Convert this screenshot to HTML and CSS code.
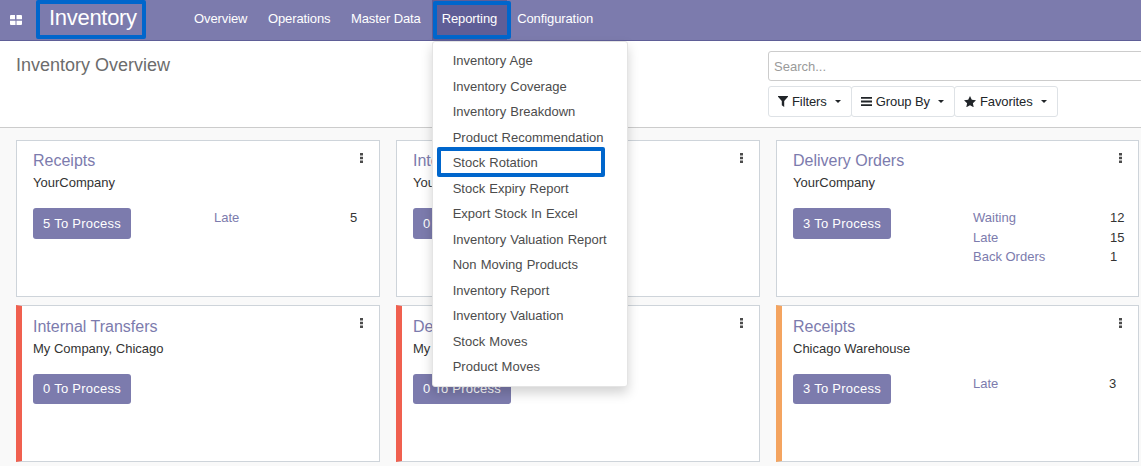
FILE: index.html
```html
<!DOCTYPE html>
<html lang="en">
<head>
    <meta charset="UTF-8">
    <meta name="viewport" content="width=device-width, initial-scale=1.0">
    <title>Inventory Overview</title>
    <link rel="stylesheet" href="styles.css">
</head>
<body>

<nav class="navbar">
    <a class="apps-toggle" aria-label="Apps">
        <svg width="12" height="10" viewBox="0 0 12 10"><path d="M0 1a1 1 0 0 1 1-1h4v4.300H0zM6.500 0H11a1 1 0 0 1 1 1v3.300H6.500zM0 5.700h5.500V10H1a1 1 0 0 1-1-1zM6.500 5.700H12V9a1 1 0 0 1-1 1H6.500z"/></svg>
    </a>
    <a class="brand marked">Inventory</a>
    <ul class="menu-list">
        <li class="menu-item">Overview</li>
        <li class="menu-item">Operations</li>
        <li class="menu-item">Master Data</li>
        <li class="menu-item active marked">
            Reporting
            <ul class="dropdown">
                <li>Inventory Age</li>
                <li>Inventory Coverage</li>
                <li>Inventory Breakdown</li>
                <li>Product Recommendation</li>
                <li class="picked">Stock Rotation</li>
                <li>Stock Expiry Report</li>
                <li>Export Stock In Excel</li>
                <li>Inventory Valuation Report</li>
                <li>Non Moving Products</li>
                <li>Inventory Report</li>
                <li>Inventory Valuation</li>
                <li>Stock Moves</li>
                <li>Product Moves</li>
            </ul>
        </li>
        <li class="menu-item">Configuration</li>
    </ul>
</nav>

<header class="control-panel">
    <h1 class="page-title">Inventory Overview</h1>
    <div class="search-side">
        <div class="search-box">Search...</div>
        <div class="search-buttons">
            <button class="filter-btn">
                <svg class="btn-icon" width="10" height="11" viewBox="0 0 10 11"><path d="M0 0h10v.8L6.200 5v6L3.800 9.200V5L0 .8z"/></svg>
                Filters<span class="caret"></span>
            </button>
            <button class="filter-btn">
                <svg class="btn-icon" width="11" height="9" viewBox="0 0 11 9"><path d="M0 0h11v1.800H0zM0 3.600h11v1.800H0zM0 7.200h11V9H0z"/></svg>
                Group By<span class="caret"></span>
            </button>
            <button class="filter-btn">
                <svg class="btn-icon" width="12" height="11" viewBox="0 0 12 11"><path d="M6 0l1.800 3.800 4.200.5-3.100 2.900.8 4.100L6 9.300l-3.700 2 .8-4.100L0 4.300l4.200-.5z"/></svg>
                Favorites<span class="caret"></span>
            </button>
        </div>
    </div>
</header>

<main class="dashboard">

    <section class="card">
        <div class="card-head">
            <div class="card-title">Receipts</div>
            <svg class="kebab" width="3" height="10" viewBox="0 0 3 10"><path d="M0 0h3v2.500H0zM0 3.800h3v2.500H0zM0 7.500h3V10H0z"/></svg>
        </div>
        <div class="card-sub">YourCompany</div>
        <div class="card-body">
            <a class="process-btn">5 To Process</a>
            <div class="stats">
                <span class="stat-name">Late</span><span>5</span>
            </div>
        </div>
    </section>

    <section class="card">
        <div class="card-head">
            <div class="card-title">Internal Transfers</div>
            <svg class="kebab" width="3" height="10" viewBox="0 0 3 10"><path d="M0 0h3v2.500H0zM0 3.800h3v2.500H0zM0 7.500h3V10H0z"/></svg>
        </div>
        <div class="card-sub">YourCompany</div>
        <div class="card-body">
            <a class="process-btn">0 To Process</a>
        </div>
    </section>

    <section class="card narrow">
        <div class="card-head">
            <div class="card-title">Delivery Orders</div>
            <svg class="kebab" width="3" height="10" viewBox="0 0 3 10"><path d="M0 0h3v2.500H0zM0 3.800h3v2.500H0zM0 7.500h3V10H0z"/></svg>
        </div>
        <div class="card-sub">YourCompany</div>
        <div class="card-body">
            <a class="process-btn">3 To Process</a>
            <div class="stats">
                <span class="stat-name">Waiting</span><span>12</span>
                <span class="stat-name">Late</span><span>15</span>
                <span class="stat-name">Back Orders</span><span>1</span>
            </div>
        </div>
    </section>

    <section class="card lower red">
        <div class="card-head">
            <div class="card-title">Internal Transfers</div>
            <svg class="kebab" width="3" height="10" viewBox="0 0 3 10"><path d="M0 0h3v2.500H0zM0 3.800h3v2.500H0zM0 7.500h3V10H0z"/></svg>
        </div>
        <div class="card-sub">My Company, Chicago</div>
        <div class="card-body">
            <a class="process-btn">0 To Process</a>
        </div>
    </section>

    <section class="card lower red">
        <div class="card-head">
            <div class="card-title">Delivery Orders</div>
            <svg class="kebab" width="3" height="10" viewBox="0 0 3 10"><path d="M0 0h3v2.500H0zM0 3.800h3v2.500H0zM0 7.500h3V10H0z"/></svg>
        </div>
        <div class="card-sub">My Company, Chicago</div>
        <div class="card-body">
            <a class="process-btn">0 To Process</a>
        </div>
    </section>

    <section class="card lower orange narrow">
        <div class="card-head">
            <div class="card-title">Receipts</div>
            <svg class="kebab" width="3" height="10" viewBox="0 0 3 10"><path d="M0 0h3v2.500H0zM0 3.800h3v2.500H0zM0 7.500h3V10H0z"/></svg>
        </div>
        <div class="card-sub">Chicago Warehouse</div>
        <div class="card-body">
            <a class="process-btn">3 To Process</a>
            <div class="stats">
                <span class="stat-name">Late</span><span>3</span>
            </div>
        </div>
    </section>

</main>

</body>
</html>
```

FILE: styles.css
```css
html, body {
    height: 466px;
    overflow: hidden;
}

body {
    font-family: "Liberation Sans", Arial, sans-serif;
    font-size: 13px;
    line-height: 1.5;
    background-color: #f9f9f9;
    color: #4c4c4c;
    margin: 0;
}

/* top bar */
.navbar {
    display: flex;
    height: 40px;
    background-color: #7c7bad;
    border-bottom: 1px solid #5f5e97;
    color: #fff;
}

.apps-toggle {
    display: flex;
    align-items: center;
    width: 26px;
    padding-left: 10px;
    fill: #fff;
}

.brand {
    position: relative;
    box-sizing: border-box;
    width: 110px;
    padding-left: 13px;
    margin-right: 38px;
    font-size: 22px;
    letter-spacing: -0.3px;
    line-height: 36px;
}

.menu-list {
    display: flex;
    gap: 0.5px;
    list-style: none;
    margin: 0;
    padding: 0;
}

.menu-item {
    position: relative;
    padding: 0 10px;
    letter-spacing: -0.1px;
    line-height: 38px;
}

.menu-item.active {
    margin-left: 0.5px;
    margin-right: -0.5px;
    background-color: #5f5e97;
}

/* blue annotation boxes drawn over the shot */
.marked::after,
.picked::after {
    content: "";
    position: absolute;
    box-sizing: border-box;
    border: 4px solid #0066cc;
    border-radius: 2px;
    pointer-events: none;
}

.brand::after {
    left: 0;
    top: 0;
    width: 110px;
    height: 39px;
}

.menu-item.marked::after {
    left: 1px;
    top: 1px;
    width: 78px;
    height: 38px;
}

.dropdown {
    position: absolute;
    top: 41px;
    left: 0;
    z-index: 10;
    width: 194px;
    margin: 0;
    padding: 6px 0;
    list-style: none;
    background-color: #fff;
    border: 1px solid #e4e4e4;
    border-radius: 3px;
    box-shadow: 0 6px 12px rgba(0, 0, 0, 0.175);
    color: #4c4c4c;
    letter-spacing: 0;
    word-spacing: 0.5px;
}

.dropdown li {
    position: relative;
    padding: 3px 20px;
    line-height: 19.5px;
    white-space: nowrap;
}

.picked::after {
    left: 4px;
    top: -3px;
    width: 168px;
    height: 30px;
}

/* title and search */
.control-panel {
    display: flex;
    justify-content: space-between;
    height: 86px;
    background-color: #fff;
    border-bottom: 1px solid #cccccc;
    overflow: hidden;
}

.page-title {
    margin: 12px 0 0 16px;
    font-size: 18px;
    font-weight: normal;
    line-height: 24px;
    color: #6c6c6c;
}

.search-side {
    width: 373px;
    padding-top: 10px;
}

.search-box {
    box-sizing: border-box;
    width: 400px;
    height: 30px;
    padding-left: 5px;
    border: 1px solid #cccccc;
    border-radius: 3px;
    line-height: 29px;
    color: #9a9a9a;
}

.search-buttons {
    display: flex;
    margin-top: 5px;
}

.filter-btn {
    display: flex;
    align-items: center;
    height: 31px;
    padding: 0 10px 0 9px;
    margin-right: -1px;
    font: inherit;
    letter-spacing: -0.09px;
    background-color: #fff;
    border: 1px solid #dee2e6;
    border-radius: 3px;
    color: #212529;
    fill: #212529;
}

.btn-icon {
    margin-right: 4px;
}

.caret {
    width: 0;
    height: 0;
    margin-left: 8px;
    border-top: 3px solid #212529;
    border-left: 3px solid transparent;
    border-right: 3px solid transparent;
}

/* kanban cards */
.dashboard {
    display: grid;
    grid-template-columns: 364px 364px 363px;
    grid-auto-rows: 157px;
    gap: 8px 16px;
    padding: 12px 0 0 16px;
}

.card {
    box-sizing: border-box;
    padding: 10px 16px 0 16px;
    background-color: #fff;
    border: 1px solid #ced4da;
}

.card.lower {
    padding-top: 11px;
    padding-left: 11px;
    border-left-width: 6px;
}

.card.red {
    border-left-color: #f0604f;
}

.card.orange {
    border-left-color: #f4a460;
}

.card-head {
    display: flex;
    justify-content: space-between;
    align-items: flex-start;
}

.card-title {
    font-size: 16px;
    line-height: 20px;
    color: #7c7bad;
}

.kebab {
    margin-top: 2px;
    fill: #4c4c4c;
}

.card.lower .kebab {
    margin-top: 1px;
}

.card-sub {
    margin-top: 2px;
    color: #333;
}

.card-body {
    display: grid;
    grid-template-columns: 181px 1fr;
    margin-top: 15px;
}

.card.narrow .card-body {
    grid-template-columns: 180px 1fr;
}

.process-btn {
    grid-column: 1;
    box-sizing: border-box;
    width: 98px;
    height: 31px;
    background-color: #7c7bad;
    border-radius: 3px;
    color: #fff;
    letter-spacing: 0.25px;
    line-height: 31px;
    text-align: center;
}

.card.lower .process-btn {
    height: 30px;
    line-height: 30px;
}

.stats {
    display: grid;
    grid-template-columns: 136px auto;
    grid-auto-rows: 20px 19.5px;
    color: #333;
}

.card.narrow .stats {
    grid-template-columns: 137px auto;
}

.card.lower.narrow .stats {
    grid-template-columns: 136px auto;
}

.stat-name {
    color: #7c7bad;
}
```
